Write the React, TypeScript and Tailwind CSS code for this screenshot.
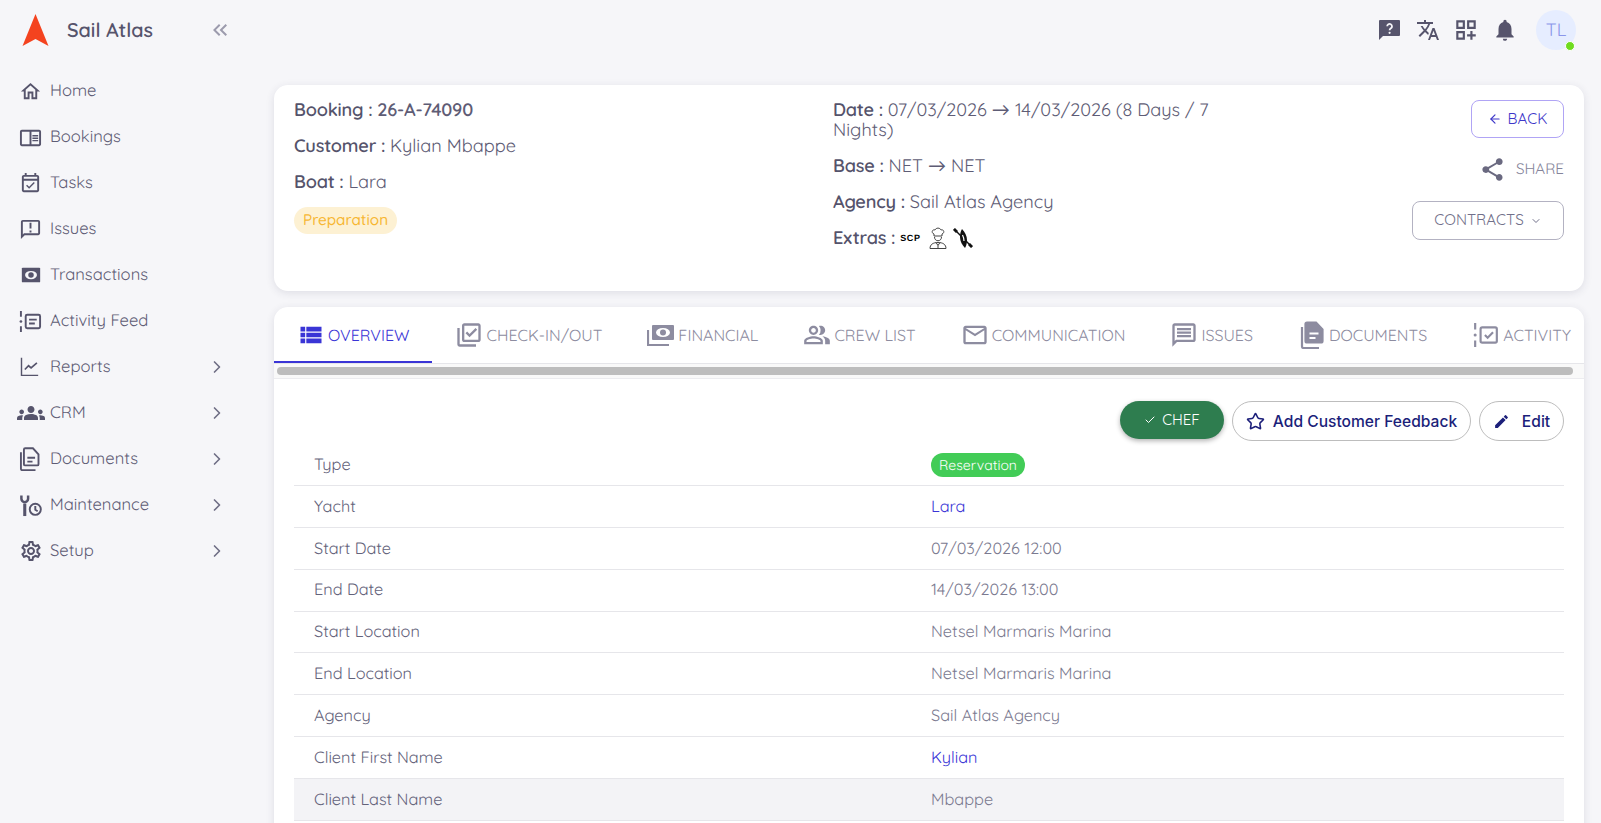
import { ArrowLeft, Check, ChevronDown, ChevronRight, Star } from "lucide-react";
import type { ReactNode } from "react";
import {
  MdOutlineHome,
  MdOutlineChromeReaderMode,
  MdOutlineEventAvailable,
  MdOutlineAnnouncement,
  MdGroups,
  MdOutlineSettings,
  MdViewList,
  MdOutlineLibraryAddCheck,
  MdOutlinePeopleAlt,
  MdOutlineEmail,
  MdOutlineMessage,
  MdShare,
  MdEdit,
  MdTranslate,
  MdOutlineDashboardCustomize,
  MdNotifications,
  MdKeyboardDoubleArrowLeft,
} from "react-icons/md";

const font = "font-['Quicksand','Lato','Noto_Sans',sans-serif]";

function ActivityIcon({ check, className }: { check?: boolean; className?: string }) {
  return (
    <svg viewBox="0 0 24 24" className={className} fill="none" stroke="currentColor" strokeWidth="2">
      <path d="M2 1v6M2 17v6" />
      <circle cx="2" cy="12" r="1.4" fill="currentColor" stroke="none" />
      <rect x="7" y="5" width="15" height="14" rx="1.5" />
      {check ? <path d="M11 12l2.5 2.5 5-5" /> : <path d="M10.5 10h8M10.5 14h6" />}
    </svg>
  );
}

function MaintenanceIcon({ className }: { className?: string }) {
  return (
    <svg viewBox="0 0 24 24" className={className} fill="none" stroke="currentColor" strokeWidth="2">
      <path d="M6 23V10" strokeWidth="3.2" />
      <path d="M2.5 1.5v3.5a3.5 3.5 0 0 0 7 0V1.500" strokeWidth="2.6" />
      <circle cx="17" cy="16" r="5.8" />
      <path d="M17 12.5v4l2.5 1.5" />
    </svg>
  );
}

function CashIcon({ className }: { className?: string }) {
  return (
    <svg viewBox="0 0 24 24" className={className}>
      <rect x="2" y="4" width="20" height="16" rx="1" fill="currentColor" />
      <ellipse cx="12" cy="12" rx="6.5" ry="4.5" fill="#f6f6f9" />
      <circle cx="12" cy="12" r="3" fill="currentColor" />
    </svg>
  );
}

function PaymentsIcon({ className }: { className?: string }) {
  return (
    <svg viewBox="0 0 28 22" className={className}>
      <path d="M1 6v15h21" fill="none" stroke="currentColor" strokeWidth="2.2" />
      <rect x="5" y="1" width="22" height="15" rx="1" fill="currentColor" />
      <ellipse cx="16" cy="8.5" rx="7" ry="4.6" fill="#fff" />
      <circle cx="16" cy="8.5" r="3" fill="currentColor" />
    </svg>
  );
}

function ReportsIcon({ className }: { className?: string }) {
  return (
    <svg viewBox="0 0 24 24" className={className} fill="none" stroke="currentColor">
      <path d="M3 1v21h20" strokeWidth="1.7" />
      <path d="M7 15l4.5-4.5 3 2.5 7-6" strokeWidth="2" />
    </svg>
  );
}

function DocumentsIcon({ filled, className }: { filled?: boolean; className?: string }) {
  const inner = filled ? "#fff" : "currentColor";
  return (
    <svg viewBox="0 0 24 28" className={className} fill="none" stroke="currentColor" strokeWidth="2.2">
      <path d="M2 6v19.5a1.5 1.5 0 0 0 1.5 1.5H19" />
      <path
        d="M7 1.5h9l6.5 7V20a1.5 1.5 0 0 1-1.5 1.5H7A1.5 1.5 0 0 1 5.500 20V3A1.500 1.500 0 0 1 7 1.500z"
        fill={filled ? "currentColor" : "none"}
      />
      <path d="M9.500 12.500h9M9.500 17h6" stroke={inner} />
    </svg>
  );
}

function HelpBubbleIcon({ className }: { className?: string }) {
  return (
    <svg viewBox="0 0 21 20" className={className}>
      <path d="M1 0h19a1 1 0 0 1 1 1v14a1 1 0 0 1-1 1H4l-4 4V1a1 1 0 0 1 1-1z" fill="currentColor" />
      <path d="M8.200 6.300a2.400 2.400 0 1 1 3.700 2c-.9.600-1.300 1-1.300 2" fill="none" stroke="#f6f6f9" strokeWidth="1.800" />
      <circle cx="10.600" cy="12.800" r="1.100" fill="#f6f6f9" />
    </svg>
  );
}

const navItems: { label: string; icon: ReactNode; sub?: boolean }[] = [
  { label: "Home", icon: <MdOutlineHome className="h-[23px] w-[23px]" /> },
  { label: "Bookings", icon: <MdOutlineChromeReaderMode className="h-[23px] w-[23px]" /> },
  { label: "Tasks", icon: <MdOutlineEventAvailable className="h-[23px] w-[23px]" /> },
  { label: "Issues", icon: <MdOutlineAnnouncement className="h-[23px] w-[23px]" /> },
  { label: "Transactions", icon: <CashIcon className="ml-[1px] h-[22px] w-[22px]" /> },
  { label: "Activity Feed", icon: <ActivityIcon className="h-[23px] w-[23px]" /> },
  { label: "Reports", icon: <ReportsIcon className="h-[20px] w-[20px]" />, sub: true },
  { label: "CRM", icon: <MdGroups className="-ml-[2px] h-[28px] w-[28px]" />, sub: true },
  { label: "Documents", icon: <DocumentsIcon className="h-[24px] w-[21px]" />, sub: true },
  { label: "Maintenance", icon: <MaintenanceIcon className="h-[23px] w-[23px]" />, sub: true },
  { label: "Setup", icon: <MdOutlineSettings className="h-[24px] w-[24px]" />, sub: true },
];

const tabs: { label: string; icon: ReactNode; active?: boolean }[] = [
  { label: "OVERVIEW", icon: <MdViewList className="h-[28px] w-[28px]" />, active: true },
  { label: "CHECK-IN/OUT", icon: <MdOutlineLibraryAddCheck className="h-[28px] w-[28px]" /> },
  { label: "FINANCIAL", icon: <PaymentsIcon className="h-[22px] w-[28px]" /> },
  { label: "CREW LIST", icon: <MdOutlinePeopleAlt className="h-[28px] w-[28px]" /> },
  { label: "COMMUNICATION", icon: <MdOutlineEmail className="h-[28px] w-[28px]" /> },
  { label: "ISSUES", icon: <MdOutlineMessage className="h-[28px] w-[28px]" /> },
  { label: "DOCUMENTS", icon: <DocumentsIcon filled className="h-[28px] w-[28px]" /> },
  { label: "ACTIVITY", icon: <ActivityIcon check className="h-[26px] w-[28px]" /> },
];

const rows: { label: string; value: ReactNode; highlight?: boolean }[] = [
  {
    label: "Type",
    value: (
      <span className="inline-flex h-[24px] items-center rounded-full bg-[#42cc57] px-[8px] text-[14px] text-white">Reservation</span>
    ),
  },
  { label: "Yacht", value: <span className="text-[#3a35d6]">Lara</span> },
  { label: "Start Date", value: "07/03/2026 12:00" },
  { label: "End Date", value: "14/03/2026 13:00" },
  { label: "Start Location", value: "Netsel Marmaris Marina" },
  { label: "End Location", value: "Netsel Marmaris Marina" },
  { label: "Agency", value: "Sail Atlas Agency" },
  { label: "Client First Name", value: <span className="text-[#3a35d6]">Kylian</span> },
  { label: "Client Last Name", value: "Mbappe", highlight: true },
];

function Info({ label, children }: { label: string; children: ReactNode }) {
  return (
    <p className="text-[18.15px] leading-[20px] text-[#5e5c75]">
      <span className="font-semibold tracking-[-0.2px] text-[#55536b]">{label} : </span>
      {children}
    </p>
  );
}

export default function App() {
  return (
    <div className={`${font} flex h-[823px] overflow-hidden bg-[#f6f6f9] [text-rendering:geometricPrecision]`}>
      <aside className="w-[274px] shrink-0">
        <div className="flex h-[59px] items-center pl-[22px]">
          <svg viewBox="0 0 26 32" className="h-[32px] w-[27px]">
            <path d="M13 0 L26 32 L13 25 L0 32 Z" fill="#f4431f" />
          </svg>
          <span className="ml-[18px] text-[19.8px] font-semibold text-[#56546c]">Sail Atlas</span>
          <MdKeyboardDoubleArrowLeft className="ml-auto mr-[42px] h-[24px] w-[24px] text-[#9c9bad]" />
        </div>
        <nav className="mt-[9px] flex flex-col">
          {navItems.map((item) => (
            <div key={item.label} className="flex h-[46px] items-center pl-[19px] text-[#5e5c75]">
              <span className="flex w-[31px] items-center text-[#56546c]">{item.icon}</span>
              <span className="text-[16.6px]">{item.label}</span>
              {item.sub ? <ChevronRight className="ml-auto mr-[47px] h-[20px] w-[20px] text-[#6f6e85]" /> : null}
            </div>
          ))}
        </nav>
      </aside>

      <main className="min-w-0 flex-1 pr-[17px]">
        <div className="flex h-[59px] items-center justify-end gap-[13px] pr-[8px] text-[#56546c]">
          <HelpBubbleIcon className="mr-[3px] h-[20px] w-[21px]" />
          <MdTranslate className="h-[24px] w-[24px]" />
          <MdOutlineDashboardCustomize className="h-[26px] w-[26px]" />
          <MdNotifications className="h-[26px] w-[26px]" />
          <div className="relative ml-[5px] flex h-[40px] w-[40px] items-center justify-center rounded-full bg-[#e6edff] text-[18px] text-[#8b96ea]">
            TL
            <span className="absolute bottom-[-1px] right-[1px] h-[10px] w-[10px] rounded-full border border-white bg-[#6fdc1f]" />
          </div>
        </div>

        <section className="mt-[26px] flex h-[206px] rounded-[14px] bg-white pl-[20px] pr-[20px] pt-[15px] shadow-[0_2px_8px_rgba(50,50,80,0.12)]">
          <div className="flex w-[539px] flex-col items-start gap-[16px]">
            <Info label="Booking">
              <span className="font-semibold tracking-[-0.2px]">26-A-74090</span>
            </Info>
            <Info label="Customer">Kylian Mbappe</Info>
            <Info label="Boat">Lara</Info>
            <span className="-mt-px flex h-[27px] items-center rounded-full bg-[#fdf1d3] px-[9px] text-[15.3px] font-medium text-[#f7b733]">Preparation</span>
          </div>
          <div className="flex w-[400px] flex-col items-start gap-[16px]">
            <Info label="Date">07/03/2026 → 14/03/2026 (8 Days / 7 Nights)</Info>
            <Info label="Base">NET → NET</Info>
            <Info label="Agency">Sail Atlas Agency</Info>
            <div className="-mt-[2px] flex h-[24px] items-center">
              <Info label="Extras">{""}</Info>
              <span className="ml-[5px] font-['Liberation_Sans',sans-serif] text-[9px] font-bold leading-none tracking-[0.6px] text-black">SCP</span>
              <svg viewBox="0 0 18 22" className="ml-[8px] h-[22px] w-[18px]" fill="none" stroke="#444" strokeWidth="1">
                <path d="M5 7C2 6 3 2 6 3c1-2.500 5-2.500 6 0 3-1 4 3 1 4v2H5z" />
                <path d="M5.500 10c0 5 7 5 7 0" />
                <path d="M1 21.500c0-4 3-6 8-6s8 2 8 6z" />
                <path d="M7 15.500l2 3 2-3M9 18.500v3" />
              </svg>
              <svg viewBox="0 0 20 20" className="ml-[6px] h-[20px] w-[20px]">
                <path d="M1 1l18 18" stroke="#111" strokeWidth="1.500" />
                <path d="M0 2l2-2 3 3-2 2zM15 17l2-2 3 3-2 2z" fill="#111" />
                <path d="M9 1c3 3 5 7 5 11s-1 6-2 8c-3-3-5-7-5-11s1-6 2-8z" fill="#111" />
                <path d="M9.500 7c1 2 1.500 4 1.500 6" stroke="#fff" strokeWidth="1.200" fill="none" />
              </svg>
            </div>
          </div>
          <div className="ml-auto flex flex-col items-end">
            <button type="button" className="flex h-[38px] w-[93px] items-center justify-center gap-[6px] rounded-[8px] border border-[#b0a4f5] text-[15.2px] text-[#3e37c9]">
              <ArrowLeft className="h-[14px] w-[14px]" /> BACK
            </button>
            <div className="mt-[17px] flex h-[28px] items-center gap-[10px] text-[15.2px] text-[#85849a]">
              <MdShare className="h-[27px] w-[27px] text-[#6a6980]" /> SHARE
            </div>
            <button type="button" className="mt-[18px] flex h-[39px] w-[152px] items-center justify-center gap-[6px] rounded-[8px] border border-[#b3b2c2] text-[15.2px] text-[#71708a]">
              CONTRACTS <ChevronDown className="h-[12px] w-[12px]" />
            </button>
          </div>
        </section>

        <section className="mt-[16px] h-[600px] rounded-[14px] bg-white shadow-[0_2px_8px_rgba(50,50,80,0.12)]">
          <div className="flex h-[57px] overflow-hidden border-b border-[#e6e6ea]">
            {tabs.map((tab) => (
              <div
                key={tab.label}
                className={`flex shrink-0 items-center gap-[3px] border-b-2 pl-[23px] pt-[1px] text-[16px] ${
                  tab.active ? "border-[#3a35d6] pr-[23px] text-[#3a35d6]" : "border-transparent pr-[22px] text-[#8d8ca0]"
                }`}
              >
                {tab.icon}
                {tab.label}
              </div>
            ))}
          </div>
          <div className="flex h-[15px] items-center border-b border-[#ececef] bg-[#f9f9f9] px-[3px]">
            <div className="h-[8px] w-[1296px] rounded-full bg-[#bdbdbd]" />
          </div>
          <div className="px-[20px] pt-[22px]">
            <div className="flex items-start justify-end gap-[8px]">
              <button type="button" className="flex h-[38px] w-[104px] items-center justify-center gap-[6px] rounded-full bg-[#2e7d4f] text-[15px] text-white shadow-[0_2px_5px_rgba(0,0,0,0.3)]">
                <Check className="h-[12px] w-[12px]" /> CHEF
              </button>
              <button type="button" className="flex h-[40px] w-[239px] items-center justify-center gap-[8px] rounded-full border border-[#bdbdbd] pt-[1px] font-['Inter',sans-serif] text-[15.6px] font-medium text-[#1c1f7a]">
                <Star className="h-[19px] w-[19px]" /> Add Customer Feedback
              </button>
              <button type="button" className="flex h-[40px] w-[85px] items-center justify-center gap-[12px] rounded-full border border-[#bdbdbd] pt-[1px] font-['Inter',sans-serif] text-[15.6px] font-medium text-[#1c1f7a]">
                <MdEdit className="h-[17px] w-[17px]" /> Edit
              </button>
            </div>
            <div className="mt-[3px]">
              {rows.map((row) => (
                <div
                  key={row.label}
                  className={`flex h-[41.9px] items-center border-b border-[#e6e6ea] pt-[1px] text-[16.3px] ${
                    row.highlight ? "bg-[#f3f3f6]" : ""
                  }`}
                >
                  <span className="w-[637px] pl-[20px] text-[#63627a]">{row.label}</span>
                  <span className="text-[#7b7a90]">{row.value}</span>
                </div>
              ))}
            </div>
          </div>
        </section>
      </main>
    </div>
  );
}
